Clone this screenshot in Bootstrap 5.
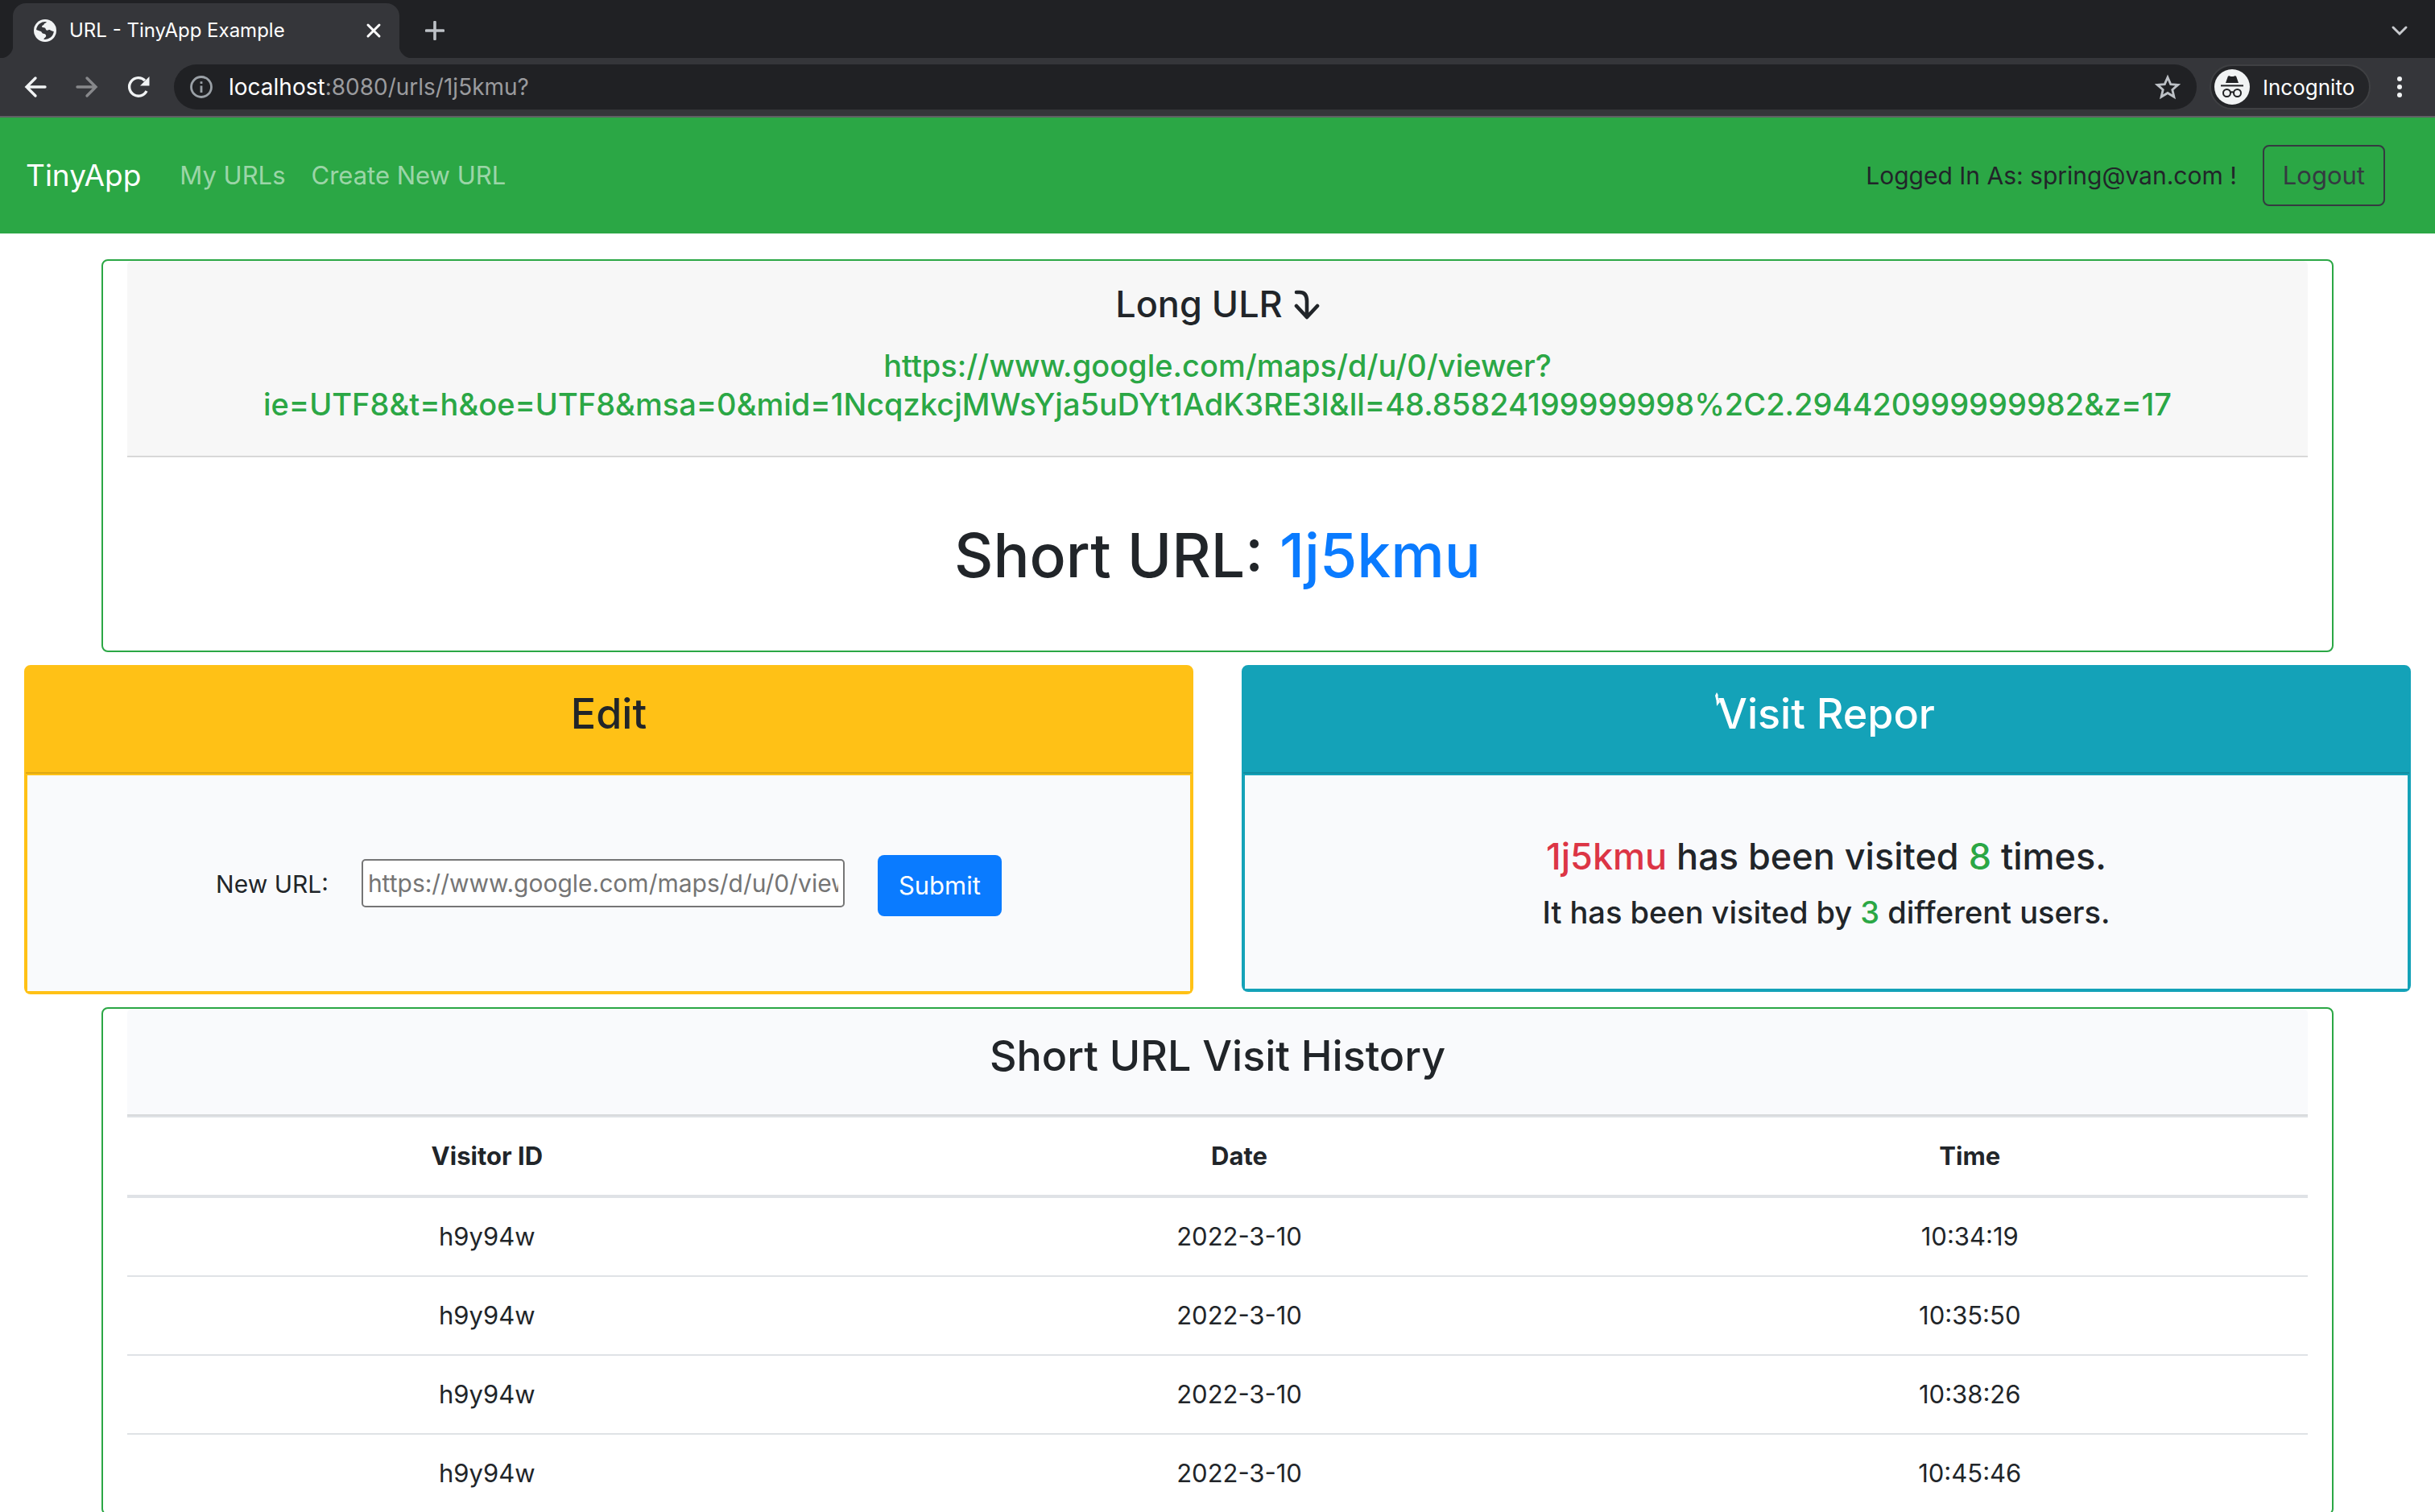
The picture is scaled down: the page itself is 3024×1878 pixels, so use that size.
<!DOCTYPE html>
<html lang="en">
<head>
<meta charset="utf-8">
<meta name="viewport" content="width=device-width, initial-scale=1">
<title>URL - TinyApp Example</title>
<link href="https://cdn.jsdelivr.net/npm/bootstrap@5.3.0/dist/css/bootstrap.min.css" rel="stylesheet">
<style>
  body { font-family: Inter, Roboto, sans-serif; font-size: 30px; color: #212529; background: #fff; }
  svg { display: block; flex: none; }

  /* browser frame */
  .tabstrip { background: #202124; height: 72px; padding-left: 16px; }
  .page-tab { background: #35363a; color: #fff; width: 480px; height: 68px; border-radius: 16px 16px 0 0; padding: 0 20px 0 26px; font-size: 24px; }
  .tab-foot { background: radial-gradient(circle at 100% 0, #202124 16px, #35363a 17px); width: 16px; height: 16px; }
  .tab-foot-left { background: radial-gradient(circle at 0 0, #202124 16px, #35363a 17px); margin-left: -16px; width: 16px; height: 16px; }
  .plain-btn { background: none; border: 0; padding: 0; }
  .toolbar { background: #35363a; height: 74px; border-bottom: 2px solid #5f6064; padding: 0 34px 0 28px; }
  .omnibox { background: #202124; height: 56px; border-radius: 28px; padding: 0 20px; font-size: 28px; color: #9a9b9e; margin-left: 28px; margin-right: 16px; }
  .incog { background: #242528; border: 2px solid #3f4043; border-radius: 28px; width: 200px; height: 56px; padding-left: 4px; color: #fff; font-size: 26px; margin-right: 22px; }

  /* site navigation */
  .site-nav { background: #2ba745; padding: 34px 62px 34px 32px; }
  .site-nav .navbar-brand { font-size: 37px; line-height: 48px; color: #fff; margin-right: 48px; padding: 0; }
  .site-nav .nav-link { font-size: 31px; padding: 0; color: rgba(255,255,255,.55); }
  .btn-logout { font-size: 31px; line-height: 48px; padding: 12px 23px; border: 2px solid #343a40; border-radius: 8px; color: #343a40; }

  /* cards */
  .stack { padding-top: 32px; gap: 16px; }
  .green-card { border: 2px solid #2ba745; border-radius: 8px; margin: 0 126px; padding: 0 30px; }
  .top-head { background: #f7f7f7; border-bottom: 2px solid #d8d8d8; border-radius: 6px 6px 0 0; padding: 24px 40px 38px; }
  .top-head h4 { font-size: 45px; line-height: 60px; margin-bottom: 22px; gap: 14px; }
  .top-head h5 { font-size: 38px; line-height: 48px; color: #2ba745; margin: 0 0 2px; }
  .short-url { font-size: 75px; line-height: 96px; padding: 74px 0 70px; margin: 0; }
  .short-url a { color: #0a7bff; text-decoration: none; }
  .pair { padding: 0 30px; gap: 60px; }
  .tone-card { border: 2px solid; border-radius: 8px; }
  .tone-edit { border-color: #ffc116; background: #ffc116; }
  .tone-info { border-color: #14a2b8; background: #14a2b8; }
  .tone-head { font-size: 52px; line-height: 68px; padding: 25px 0 38px; margin: 0; border-bottom: 2px solid rgba(0,0,0,.125); }
  .tone-body { background: #f9fafc; border: 2px solid; border-color: inherit; }
  .edit-form { padding: 99px 0 93px; gap: 41px; }
  .edit-form label { line-height: 58px; margin-bottom: 11px; }
  .edit-form input { width: 600px; height: 60px; font-size: 30px; padding: 2px 6px; border: 2px solid #767676; border-radius: 5px; margin-bottom: 11px; background: #fff; }
  .edit-form input::placeholder { color: #757575; opacity: 1; }
  .btn-send { background: #0a7bff; color: #fff; font-size: 31px; line-height: 52px; padding: 12px 26px; border: 0; border-radius: 8px; }
  .report { padding: 72px 0 71px; }
  .report h4 { font-size: 45px; line-height: 58px; margin-bottom: 16px; }
  .report h5 { font-size: 38px; line-height: 48px; margin: 0; }
  .tick { left: -4px; top: 5px; }
  .c-red { color: #dc3545; }
  .c-green { color: #2ba745; }

  /* visit history */
  .history-head { background: #f9fafc; border-radius: 6px 6px 0 0; border-color: #d8dadc; }
  .visits { border-collapse: separate; border-spacing: 0; border-top: 2px solid #dfe2e5; margin: 0; font-size: 31px; line-height: 48px; table-layout: fixed; }
  .visits > thead > tr > th, .visits > tbody > tr > td { padding: 24px; border: 0; border-bottom: 2px solid #dfe2e6; background: none; color: #212529; box-shadow: none; }
  .visits > thead > tr > th { border-bottom-width: 4px; font-weight: 700; }
  .col-a { width: 33%; }
  .col-b { width: 36%; }
</style>
<script src="https://cdn.jsdelivr.net/npm/bootstrap@5.3.0/dist/js/bootstrap.bundle.min.js"></script>
</head>
<body class="vh-100 overflow-hidden">

<header>
  <div class="tabstrip d-flex align-items-end">
    <div class="tab-foot-left"></div>
    <div class="page-tab d-flex align-items-center">
      <svg width="28" height="28" viewBox="0 0 28 28"><circle cx="14" cy="14" r="14" fill="#f1f3f4"/><path d="M16 3.2c-1 1.600-3 1.300-3.400 3-.3 1.500-2.600 1-2.600 2.800 0 1.500 2 .8 3.500 1.500 1.600.8 1 3 3 3.200 1.500.2 2.200-1.200 3.600-.5 1 .5 2.600 1.800 4.700 1.800A11 11 0 0 1 12.500 24.900c0-1.900 2.700-2.200 2.700-4.300 0-2-1.600-2.900-3.500-2.900-1.800 0-1.700-2.700-3.700-2.900L3.100 13A11 11 0 0 1 16 3.200z" fill="#35363a" /></svg>
      <span class="ms-3 flex-grow-1">URL - TinyApp Example</span>
      <button class="plain-btn" aria-label="Close tab"><svg width="24" height="24" viewBox="0 0 24 24"><path d="M5 5l14 14M19 5L5 19" stroke="#fff" stroke-width="3" stroke-linecap="round"/></svg></button>
    </div>
    <div class="tab-foot"></div>
    <div class="d-flex flex-grow-1 align-items-center justify-content-between align-self-stretch">
      <button class="plain-btn ms-3 pt-1" aria-label="New tab"><svg width="24" height="24" viewBox="0 0 24 24"><path d="M12 1.500v21M1.500 12h21" stroke="#bdc1c6" stroke-width="3.600" stroke-linecap="round"/></svg></button>
      <button class="plain-btn me-4 pe-2 pt-1" aria-label="Search tabs"><svg width="24" height="24" viewBox="0 0 24 24"><path d="M4 8l8 8 8-8" fill="none" stroke="#c8cace" stroke-width="3" stroke-linecap="round"/></svg></button>
    </div>
  </div>
  <div class="toolbar d-flex align-items-center">
    <button class="plain-btn" aria-label="Back"><svg width="32" height="32" viewBox="0 0 32 32"><path d="M28 16H5M16 5L5 16l11 11" fill="none" stroke="#f1f3f4" stroke-width="3.400" stroke-linecap="round"/></svg></button>
    <button class="plain-btn ms-4 ps-2" aria-label="Forward"><svg width="32" height="32" viewBox="0 0 32 32"><path d="M4 16h23M16 5l11 11-11 11" fill="none" stroke="#87888b" stroke-width="3.400" stroke-linecap="round"/></svg></button>
    <button class="plain-btn ms-4 ps-2" aria-label="Reload"><svg width="32" height="32" viewBox="0 0 32 32"><path d="M26 21a11.300 11.300 0 1 1-2-13" fill="none" stroke="#f1f3f4" stroke-width="3.400"/><path d="M29.500 3v11.500H18z" fill="#f1f3f4"/></svg></button>
    <div class="omnibox d-flex align-items-center flex-grow-1">
      <svg width="28" height="28" viewBox="0 0 28 28"><circle cx="14" cy="14" r="12.500" fill="none" stroke="#9aa0a6" stroke-width="2.800"/><path d="M14 12.500v8.500M14 7.200v2.800" stroke="#9aa0a6" stroke-width="2.800"/></svg>
      <div class="ms-3 ps-1 flex-grow-1"><span class="text-white">localhost</span>:8080/urls/1j5kmu?</div>
      <svg width="32" height="32" viewBox="0 0 32 32"><path d="M16 4l3.700 8.600 9 .8-6.900 6 2.100 8.900-7.900-4.800-7.900 4.800 2.100-8.900-6.900-6 9-.8z" fill="none" stroke="#bdc1c6" stroke-width="2.800"/></svg>
    </div>
    <div class="incog d-flex align-items-center">
      <svg width="44" height="44" viewBox="0 0 44 44"><circle cx="22" cy="22" r="22" fill="#f1f3f4"/><path d="M14 17l2.800-8c.4-1 1.300-1 2.300-.6 1.800.7 4 .7 5.800 0 1-.4 1.900-.4 2.300.6l2.800 8z" fill="#202124"/><path d="M8 20.400h28" stroke="#202124" stroke-width="2"/><circle cx="15.500" cy="29.500" r="4.500" fill="none" stroke="#202124" stroke-width="2"/><circle cx="28.500" cy="29.500" r="4.500" fill="none" stroke="#202124" stroke-width="2"/><path d="M20 29q2-1.500 4 0" fill="none" stroke="#202124" stroke-width="2"/></svg>
      <span class="ms-3">Incognito</span>
    </div>
    <button class="plain-btn ms-1" aria-label="Menu"><svg width="20" height="32" viewBox="0 0 20 32"><g fill="#f1f3f4"><circle cx="10" cy="6" r="3"/><circle cx="10" cy="16" r="3"/><circle cx="10" cy="26" r="3"/></g></svg></button>
  </div>
</header>

<nav class="site-nav d-flex align-items-center">
  <a class="navbar-brand" href="#">TinyApp</a>
  <a class="nav-link" href="#">My URLs</a>
  <a class="nav-link ms-4 ps-2" href="#">Create New URL</a>
  <span class="ms-auto me-4 pe-2">Logged In As: spring@van.com !</span>
  <button class="btn btn-logout" type="button">Logout</button>
</nav>

<main class="stack d-flex flex-column text-center">
  <section class="green-card">
    <div class="top-head">
      <h4 class="d-flex justify-content-center align-items-center">Long ULR
        <svg width="32" height="38" viewBox="0 0 32 38"><path d="M3 4h4q9 0 9 11v19M3 21l13 14 13-14" fill="none" stroke="#212529" stroke-width="4.600" stroke-linecap="round" stroke-linejoin="round"/></svg>
      </h4>
      <h5>https://www.google.com/maps/d/u/0/viewer?<wbr>ie=UTF8&amp;t=h&amp;oe=UTF8&amp;msa=0&amp;mid=1NcqzkcjMWsYja5uDYt1AdK3RE3I&amp;ll=48.85824199999998%2C2.294420999999982&amp;z=17</h5>
    </div>
    <h1 class="short-url">Short URL: <a href="#">1j5kmu</a></h1>
  </section>

  <div class="pair d-flex align-items-start">
    <section class="tone-card tone-edit flex-fill w-50">
      <h3 class="tone-head">Edit</h3>
      <div class="tone-body">
        <form class="edit-form d-flex justify-content-center align-items-end">
          <label for="newUrl">New URL:</label>
          <input id="newUrl" type="text" placeholder="https://www.google.com/maps/d/u/0/viewer">
          <button class="btn btn-send" type="button">Submit</button>
        </form>
      </div>
    </section>
    <section class="tone-card tone-info flex-fill w-50">
      <h3 class="tone-head text-white"><span class="position-relative">Visit Repor<svg class="tick position-absolute" width="8" height="18" viewBox="0 0 8 18"><path d="M3 0q2 2 1.500 6L7 12 3 17 2.500 10 1 4z" fill="#fff"/></svg></span></h3>
      <div class="tone-body report">
        <h4><span class="c-red">1j5kmu</span> has been visited <span class="c-green">8</span> times.</h4>
        <h5>It has been visited by <span class="c-green">3</span> different users.</h5>
      </div>
    </section>
  </div>

  <section class="green-card">
    <h3 class="tone-head history-head">Short URL Visit History</h3>
    <table class="table visits">
      <thead>
        <tr><th class="col-a" scope="col">Visitor ID</th><th class="col-b" scope="col">Date</th><th scope="col">Time</th></tr>
      </thead>
      <tbody>
        <tr><td>h9y94w</td><td>2022-3-10</td><td>10:34:19</td></tr>
        <tr><td>h9y94w</td><td>2022-3-10</td><td>10:35:50</td></tr>
        <tr><td>h9y94w</td><td>2022-3-10</td><td>10:38:26</td></tr>
        <tr><td>h9y94w</td><td>2022-3-10</td><td>10:45:46</td></tr>
      </tbody>
    </table>
  </section>
</main>
</body>
</html>
